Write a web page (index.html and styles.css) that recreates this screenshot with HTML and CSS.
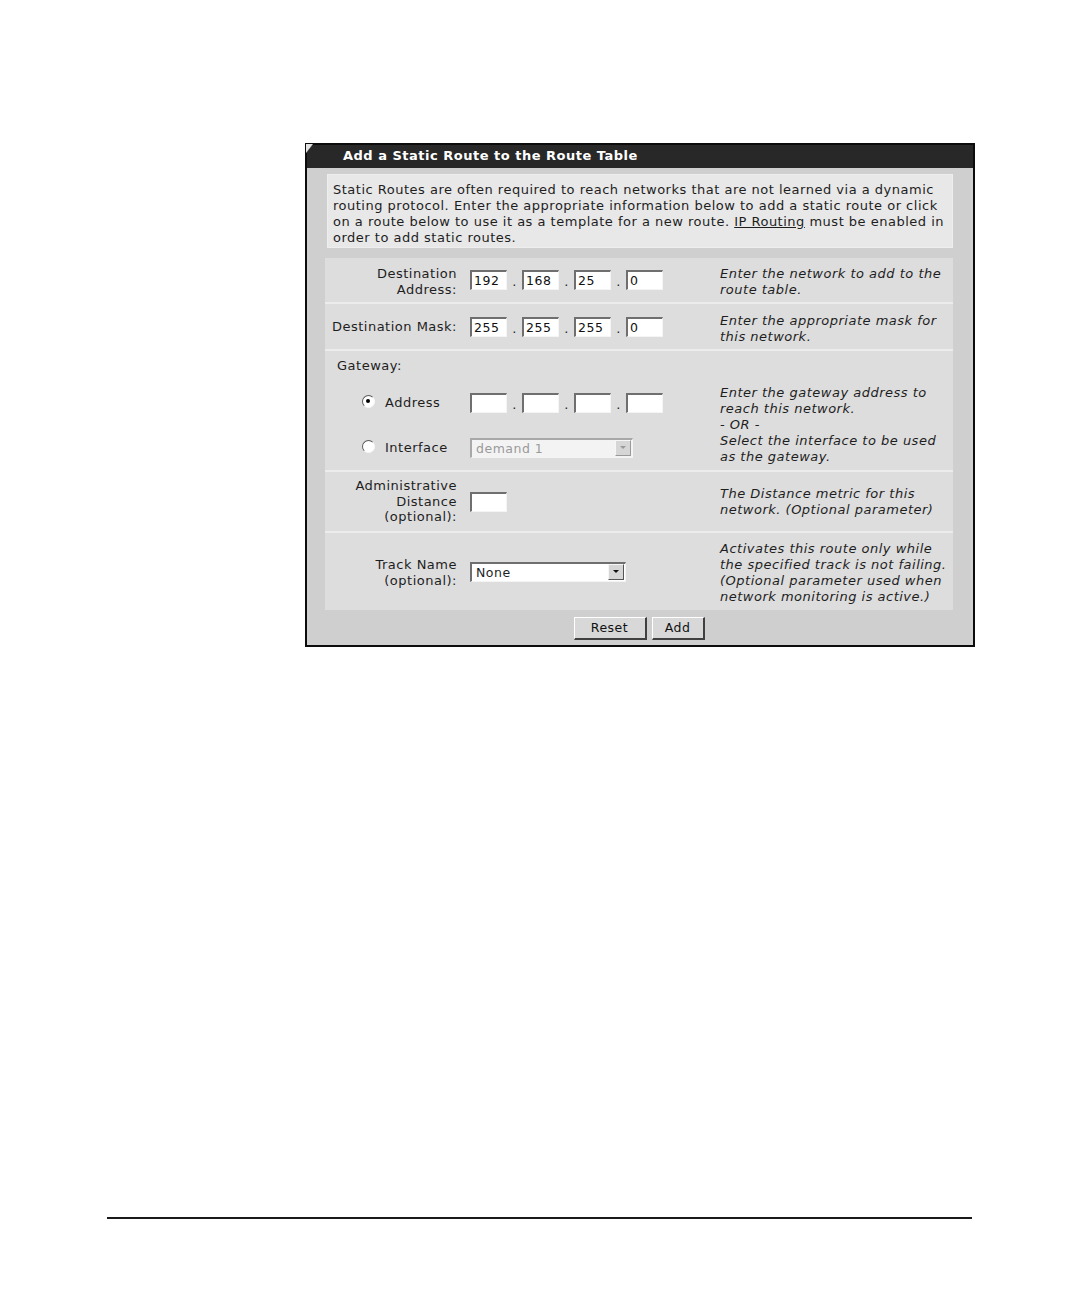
FILE: index.html
```html
<!DOCTYPE html>
<html>
<head>
<meta charset="utf-8">
<title>Add a Static Route</title>
<link rel="stylesheet" href="styles.css">
</head>
<body>
<div class="page">
  <div class="panel">
    <div class="head">Add a Static Route to the Route Table</div>
    <div class="body">
      <div class="intro">Static Routes are often required to reach networks that are not learned via a dynamic<br>routing protocol. Enter the appropriate information below to add a static route or click<br>on a route below to use it as a template for a new route. <span class="link">IP Routing</span> must be enabled in<br>order to add static routes.</div>

      <div class="form">
        <div class="row r1">
          <div class="lbl">Destination<br>Address:</div>
          <div class="ctl">
            <span class="ip">192</span><span class="dot">.</span><span class="ip">168</span><span class="dot">.</span><span class="ip">25</span><span class="dot">.</span><span class="ip">0</span>
          </div>
          <div class="desc">Enter the network to add to the<br>route table.</div>
        </div>

        <div class="row r2">
          <div class="lbl">Destination Mask:</div>
          <div class="ctl">
            <span class="ip">255</span><span class="dot">.</span><span class="ip">255</span><span class="dot">.</span><span class="ip">255</span><span class="dot">.</span><span class="ip">0</span>
          </div>
          <div class="desc">Enter the appropriate mask for<br>this network.</div>
        </div>

        <div class="row r3">
          <div class="gw">Gateway:</div>
          <div class="opt o1"><span class="radio on"></span>Address</div>
          <div class="ctl c1">
            <span class="ip"></span><span class="dot">.</span><span class="ip"></span><span class="dot">.</span><span class="ip"></span><span class="dot">.</span><span class="ip"></span>
          </div>
          <div class="opt o2"><span class="radio"></span>Interface</div>
          <div class="ctl c2">
            <span class="sel dis"><span class="val">demand 1</span><span class="arr"></span></span>
          </div>
          <div class="desc d3">Enter the gateway address to<br>reach this network.<br>- OR -<br>Select the interface to be used<br>as the gateway.</div>
        </div>

        <div class="row r4">
          <div class="lbl">Administrative<br>Distance<br>(optional):</div>
          <div class="ctl"><span class="ip"></span></div>
          <div class="desc">The Distance metric for this<br>network. (Optional parameter)</div>
        </div>

        <div class="row r5">
          <div class="lbl">Track Name<br>(optional):</div>
          <div class="ctl">
            <span class="sel trk"><span class="val">None</span><span class="arr"></span></span>
          </div>
          <div class="desc">Activates this route only while<br>the specified track is not failing.<br>(Optional parameter used when<br>network monitoring is active.)</div>
        </div>
      </div>

      <div class="btns">
        <span class="btn reset">Reset</span>
        <span class="btn add">Add</span>
      </div>
    </div>
  </div>
  <div class="rule"></div>
</div>
</body>
</html>
```

FILE: styles.css
```css
html, body {
  margin: 0;
  padding: 0;
  background: #ffffff;
}

body {
  font-family: "DejaVu Sans", Verdana, sans-serif;
  font-size: 13px;
  letter-spacing: 0.5px;
  color: #1e1e1e;
}

.page {
  padding-top: 143px;
}

.panel {
  margin-left: 305px;
  width: 670px;
  box-sizing: border-box;
  border: 2px solid #0c0c0c;
  background: #cfcfcf;
}

.head {
  position: relative;
  height: 23px;
  line-height: 22px;
  background: #282828;
  color: #ffffff;
  font-weight: bold;
  font-size: 13px;
  padding-left: 36px;
  white-space: nowrap;
}

.head::before {
  content: "";
  position: absolute;
  left: -1px;
  top: -1px;
  width: 7px;
  height: 9px;
  background: linear-gradient(to bottom right, #e4e4e4 0, #e4e4e4 45%, transparent 55%);
}

.body {
  padding: 6px 20px 5px 18px;
}

.intro {
  margin-left: 2px;
  height: 74px;
  box-sizing: border-box;
  padding: 7px 0 0 5px;
  background: #e8e8e8;
  border: 1px solid #eeeeee;
  line-height: 16px;
  white-space: nowrap;
}

.link {
  text-decoration: underline;
}

.form {
  margin-top: 10px;
  display: flex;
  flex-direction: column;
  gap: 2px;
  background: #ececec;
}

.row {
  display: grid;
  grid-template-columns: 138px 250px 1fr;
  background: #dddddd;
  align-items: center;
}

.r1 { height: 44px; }
.r2 { height: 45px; }
.r3 {
  height: 119px;
  grid-template-rows: 29px 45px 45px;
}
.r4 { height: 59px; }
.r5 { height: 77px; }

.lbl {
  text-align: right;
  padding-right: 6px;
  line-height: 16px;
  white-space: nowrap;
}

.r1 .lbl { padding-top: 4px; }
.r4 .lbl { line-height: 15.5px; }
.r5 .lbl { padding-top: 3px; }

.ctl {
  padding-left: 7px;
  display: flex;
  align-items: center;
}

.desc {
  padding-left: 7px;
  font-style: italic;
  line-height: 16px;
  white-space: nowrap;
}

.r1 .desc { padding-top: 4px; }
.r2 .desc { padding-top: 4px; }
.r5 .desc { padding-top: 3px; }

.ip {
  display: inline-block;
  width: 37px;
  height: 20px;
  box-sizing: border-box;
  background: #ffffff;
  border-style: solid;
  border-width: 2px 1px 1px 2px;
  border-color: #6f6f6f #f4f4f4 #f4f4f4 #6f6f6f;
  font-size: 12.5px;
  line-height: 17px;
  padding-left: 2px;
  color: #111;
}

.dot {
  display: inline-block;
  width: 15px;
  text-align: center;
  line-height: 20px;
  padding-top: 4px;
}

.gw {
  grid-column: 1 / 3;
  grid-row: 1;
  align-self: start;
  padding: 7px 0 0 12px;
  line-height: 16px;
}

.opt {
  display: flex;
  align-items: center;
  padding-left: 37px;
  white-space: nowrap;
}

.o1 { grid-column: 1; grid-row: 2; }
.c1 { grid-column: 2; grid-row: 2; }
.o2 { grid-column: 1; grid-row: 3; }
.c2 { grid-column: 2; grid-row: 3; }

.d3 {
  grid-column: 3;
  grid-row: 2 / 4;
  align-self: center;
}

.radio {
  position: relative;
  display: inline-block;
  width: 13px;
  height: 13px;
  box-sizing: border-box;
  border-radius: 50%;
  background: #ffffff;
  border: 1px solid;
  border-color: #5a5a5a #f8f8f8 #f8f8f8 #5a5a5a;
  margin-right: 10px;
  margin-top: -3px;
}

.radio.on::after {
  content: "";
  position: absolute;
  left: 3px;
  top: 3px;
  width: 4px;
  height: 4px;
  border-radius: 50%;
  background: #000;
}

.sel {
  display: inline-flex;
  align-items: center;
  justify-content: space-between;
  height: 20px;
  box-sizing: border-box;
  background: #ffffff;
  border-style: solid;
  border-width: 2px 1px 1px 2px;
  border-color: #6f6f6f #f4f4f4 #f4f4f4 #6f6f6f;
}

.sel.dis {
  width: 163px;
  background: #f3f3f3;
  color: #9a9a9a;
  border-color: #a8a8a8 #f4f4f4 #f4f4f4 #a8a8a8;
}

.sel.trk {
  width: 156px;
}

.val {
  padding-left: 4px;
  font-size: 12.5px;
  white-space: nowrap;
}

.arr {
  position: relative;
  width: 16px;
  height: 16px;
  box-sizing: border-box;
  margin-right: 1px;
  background: #d6d6d6;
  border-style: solid;
  border-width: 1px;
  border-color: #f6f6f6 #555 #555 #f6f6f6;
}

.arr::after {
  content: "";
  position: absolute;
  left: 4px;
  top: 5px;
  border-left: 3px solid transparent;
  border-right: 3px solid transparent;
  border-top: 3px solid #111;
}

.dis .arr {
  border-color: #f6f6f6 #999 #999 #f6f6f6;
}

.dis .arr::after {
  border-top-color: #999;
}

.btns {
  margin-top: 7px;
  display: flex;
  justify-content: center;
  gap: 5px;
}

.btn {
  display: inline-block;
  height: 23px;
  box-sizing: border-box;
  line-height: 20px;
  text-align: center;
  background: #d8d8d8;
  border-style: solid;
  border-width: 1px 2px 2px 1px;
  border-color: #ffffff #404040 #404040 #ffffff;
  font-size: 12.5px;
  color: #111;
}

.reset { width: 73px; }
.add { width: 53px; }

.rule {
  margin-top: 570px;
  margin-left: 107px;
  width: 865px;
  height: 2px;
  background: #1a1a1a;
}
```
